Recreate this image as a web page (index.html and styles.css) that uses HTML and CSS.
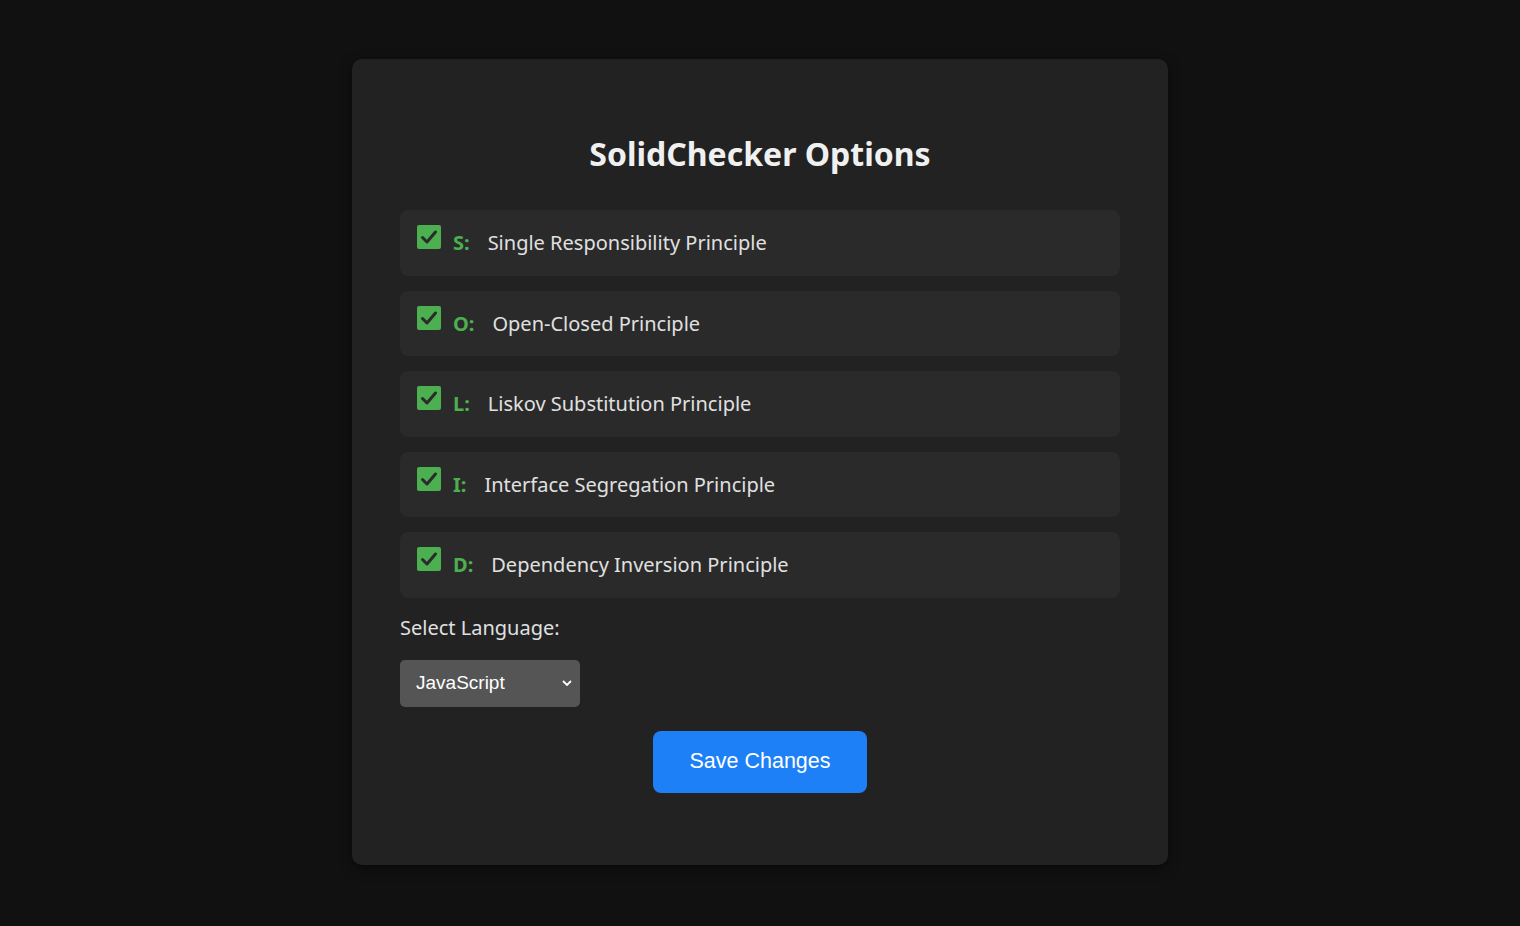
FILE: index.html
```html
<!DOCTYPE html>
<html lang="en">
<head>
<meta charset="utf-8">
<title>SolidChecker Options</title>
<link rel="stylesheet" href="styles.css">
</head>
<body>
<main class="card">
  <h1 class="title">SolidChecker Options</h1>
  <div class="rows">
    <label class="row">
      <span class="box"><svg viewBox="0 0 24 24" width="24" height="24"><rect x="0" y="0" width="24" height="24" rx="2" fill="#4caf50"/><path d="M5.5 12.5 L10 17 L18.5 7" fill="none" stroke="#2b2b2b" stroke-width="3" stroke-linecap="round" stroke-linejoin="round"/></svg></span>
      <span class="key">S:</span><span class="name">Single Responsibility Principle</span>
    </label>
    <label class="row">
      <span class="box"><svg viewBox="0 0 24 24" width="24" height="24"><rect x="0" y="0" width="24" height="24" rx="2" fill="#4caf50"/><path d="M5.5 12.5 L10 17 L18.5 7" fill="none" stroke="#2b2b2b" stroke-width="3" stroke-linecap="round" stroke-linejoin="round"/></svg></span>
      <span class="key">O:</span><span class="name">Open-Closed Principle</span>
    </label>
    <label class="row">
      <span class="box"><svg viewBox="0 0 24 24" width="24" height="24"><rect x="0" y="0" width="24" height="24" rx="2" fill="#4caf50"/><path d="M5.5 12.5 L10 17 L18.5 7" fill="none" stroke="#2b2b2b" stroke-width="3" stroke-linecap="round" stroke-linejoin="round"/></svg></span>
      <span class="key">L:</span><span class="name">Liskov Substitution Principle</span>
    </label>
    <label class="row">
      <span class="box"><svg viewBox="0 0 24 24" width="24" height="24"><rect x="0" y="0" width="24" height="24" rx="2" fill="#4caf50"/><path d="M5.5 12.5 L10 17 L18.5 7" fill="none" stroke="#2b2b2b" stroke-width="3" stroke-linecap="round" stroke-linejoin="round"/></svg></span>
      <span class="key">I:</span><span class="name">Interface Segregation Principle</span>
    </label>
    <label class="row">
      <span class="box"><svg viewBox="0 0 24 24" width="24" height="24"><rect x="0" y="0" width="24" height="24" rx="2" fill="#4caf50"/><path d="M5.5 12.5 L10 17 L18.5 7" fill="none" stroke="#2b2b2b" stroke-width="3" stroke-linecap="round" stroke-linejoin="round"/></svg></span>
      <span class="key">D:</span><span class="name">Dependency Inversion Principle</span>
    </label>
  </div>
  <div class="lang-label">Select Language:</div>
  <div class="select">
    <span>JavaScript</span>
    <svg class="chev" viewBox="0 0 10 6" width="10" height="6"><path d="M1 1 L5 5 L9 1" fill="none" stroke="#ffffff" stroke-width="1.8"/></svg>
  </div>
  <div class="actions">
    <button class="save">Save Changes</button>
  </div>
</main>
</body>
</html>
```

FILE: styles.css
```css
html, body {
  margin: 0;
  padding: 0;
  background: #111111;
}
body {
  font-family: "Noto Sans", "Open Sans", sans-serif;
  color: #e0e0e0;
  display: flex;
  justify-content: center;
  padding-top: 59px;
  height: 926px;
  box-sizing: border-box;
}
.card {
  width: 816px;
  height: 806px;
  box-sizing: border-box;
  background: #222222;
  border-radius: 10px;
  padding: 48px;
  box-shadow: 0 4px 12px rgba(0, 0, 0, 0.5);
}
.title {
  margin: 26px 0 35px;
  font-size: 32px;
  line-height: 42px;
  font-weight: 700;
  text-align: center;
  color: #f0f0f0;
}
.rows {
  display: flex;
  flex-direction: column;
  gap: 15px;
}
.row {
  display: flex;
  align-items: flex-start;
  background: #2a2a2a;
  border-radius: 8px;
  padding: 15px 17px 15.5px;
  font-size: 20px;
  line-height: 35px;
}
.box {
  width: 24px;
  height: 24px;
  display: block;
  margin-right: 12px;
}
.box svg { display: block; }
.key {
  color: #4caf50;
  font-weight: 700;
  margin-right: 18px;
}
.name {
  color: #e0e0e0;
}
.lang-label {
  margin-top: 15px;
  font-size: 20px;
  line-height: 30px;
  color: #e0e0e0;
}
.select {
  margin-top: 17px;
  width: 180px;
  height: 47px;
  box-sizing: border-box;
  background: #555555;
  border-radius: 5px;
  padding: 0 8px 0 16px;
  display: flex;
  align-items: center;
  justify-content: space-between;
  font-family: "Liberation Sans", Arial, sans-serif;
  font-size: 19px;
  color: #ffffff;
}
.chev { display: block; }
.actions {
  display: flex;
  justify-content: center;
  margin-top: 24px;
}
.save {
  width: 214px;
  height: 62px;
  border: none;
  border-radius: 8px;
  background: #1e80f7;
  color: #ffffff;
  font-family: "Liberation Sans", Arial, sans-serif;
  font-size: 21.5px;
  cursor: pointer;
}
```
